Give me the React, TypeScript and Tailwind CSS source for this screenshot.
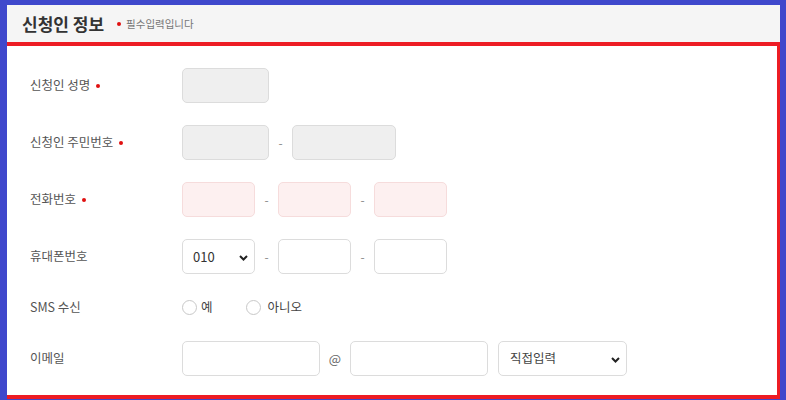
import type { JSX, ReactNode } from "react";

const font = { fontFamily: '"Noto Sans CJK KR", "Noto Sans", sans-serif' };

function Dot({ className }: { className: string }): JSX.Element {
  return <span className={`inline-block h-[4px] w-[4px] rounded-full bg-[#e01010] ${className}`} />;
}

function Row({ label, req, className, children }: { label: string; req?: boolean; className: string; children: ReactNode }): JSX.Element {
  return (
    <div className={`flex h-[35px] items-center ${className}`}>
      <div className="flex w-[152px] shrink-0 items-center text-[12.5px] text-[#555]">
        {label}
        {req && <Dot className="ml-[6px]" />}
      </div>
      <div className="flex items-center">{children}</div>
    </div>
  );
}

function Dash(): JSX.Element {
  return <span className="w-[23px] text-center text-[12px] text-[#888]">-</span>;
}

function Chevron(): JSX.Element {
  return (
    <svg width="9" height="6" viewBox="0 0 9 6" className="absolute right-[6px] top-[15px]">
      <path d="M1 1l3.5 3.5L8 1" fill="none" stroke="#222" strokeWidth="2" />
    </svg>
  );
}

export default function App(): JSX.Element {
  const gray = "h-[35px] rounded-[5px] border border-[#dcdcdc] bg-[#efefef]";
  const pink = "h-[35px] w-[73px] rounded-[5px] border border-[#f6dcdc] bg-[#fdf0f0]";
  const white = "h-[35px] rounded-[5px] border border-[#dcdcdc] bg-white";

  return (
    <div className="h-[400px] w-[786px] border-b border-l-[7px] border-r-[6px] border-t-[5px] border-[#3f48cc] bg-white" style={font}>
      <div className="flex h-[37px] items-center bg-[#f5f5f5] pl-[15px]">
        <h1 className="text-[17px] font-bold text-[#333]">신청인 정보</h1>
        <Dot className="ml-[13px]" />
        <span className="ml-[5px] text-[10.5px] text-[#777]">필수입력입니다</span>
      </div>
      <div className="h-[357px] border-b-4 border-r-[3px] border-t-4 border-[#ed1c24] pl-[23px] pt-[22px]">
        <Row label="신청인 성명" req className="">
          <div className={`${gray} w-[87px]`} />
        </Row>
        <Row label="신청인 주민번호" req className="mt-[22px]">
          <div className={`${gray} w-[87px]`} />
          <Dash />
          <div className={`${gray} w-[104px]`} />
        </Row>
        <Row label="전화번호" req className="mt-[22px]">
          <div className={pink} />
          <Dash />
          <div className={pink} />
          <Dash />
          <div className={pink} />
        </Row>
        <Row label="휴대폰번호" className="mt-[22px]">
          <div className={`${white} relative flex w-[73px] items-center pl-[10px] text-[13px] text-[#333]`}>
            010
            <Chevron />
          </div>
          <Dash />
          <div className={`${white} w-[73px]`} />
          <Dash />
          <div className={`${white} w-[73px]`} />
        </Row>
        <Row label="SMS 수신" className="mt-[16px]">
          <span className="h-[15px] w-[15px] rounded-full border border-[#c8c8c8] bg-white" />
          <span className="ml-[4px] text-[12.5px] text-[#444]">예</span>
          <span className="ml-[33px] h-[15px] w-[15px] rounded-full border border-[#c8c8c8] bg-white" />
          <span className="ml-[7px] text-[12.5px] text-[#444]">아니오</span>
        </Row>
        <Row label="이메일" className="mt-[16px]">
          <div className={`${white} w-[138px]`} />
          <span className="w-[30px] text-center text-[13px] text-[#666]">@</span>
          <div className={`${white} w-[138px]`} />
          <div className={`${white} relative ml-[10px] flex w-[129px] items-center pl-[11px] text-[12.5px] text-[#444]`}>
            직접입력
            <Chevron />
          </div>
        </Row>
      </div>
    </div>
  );
}
